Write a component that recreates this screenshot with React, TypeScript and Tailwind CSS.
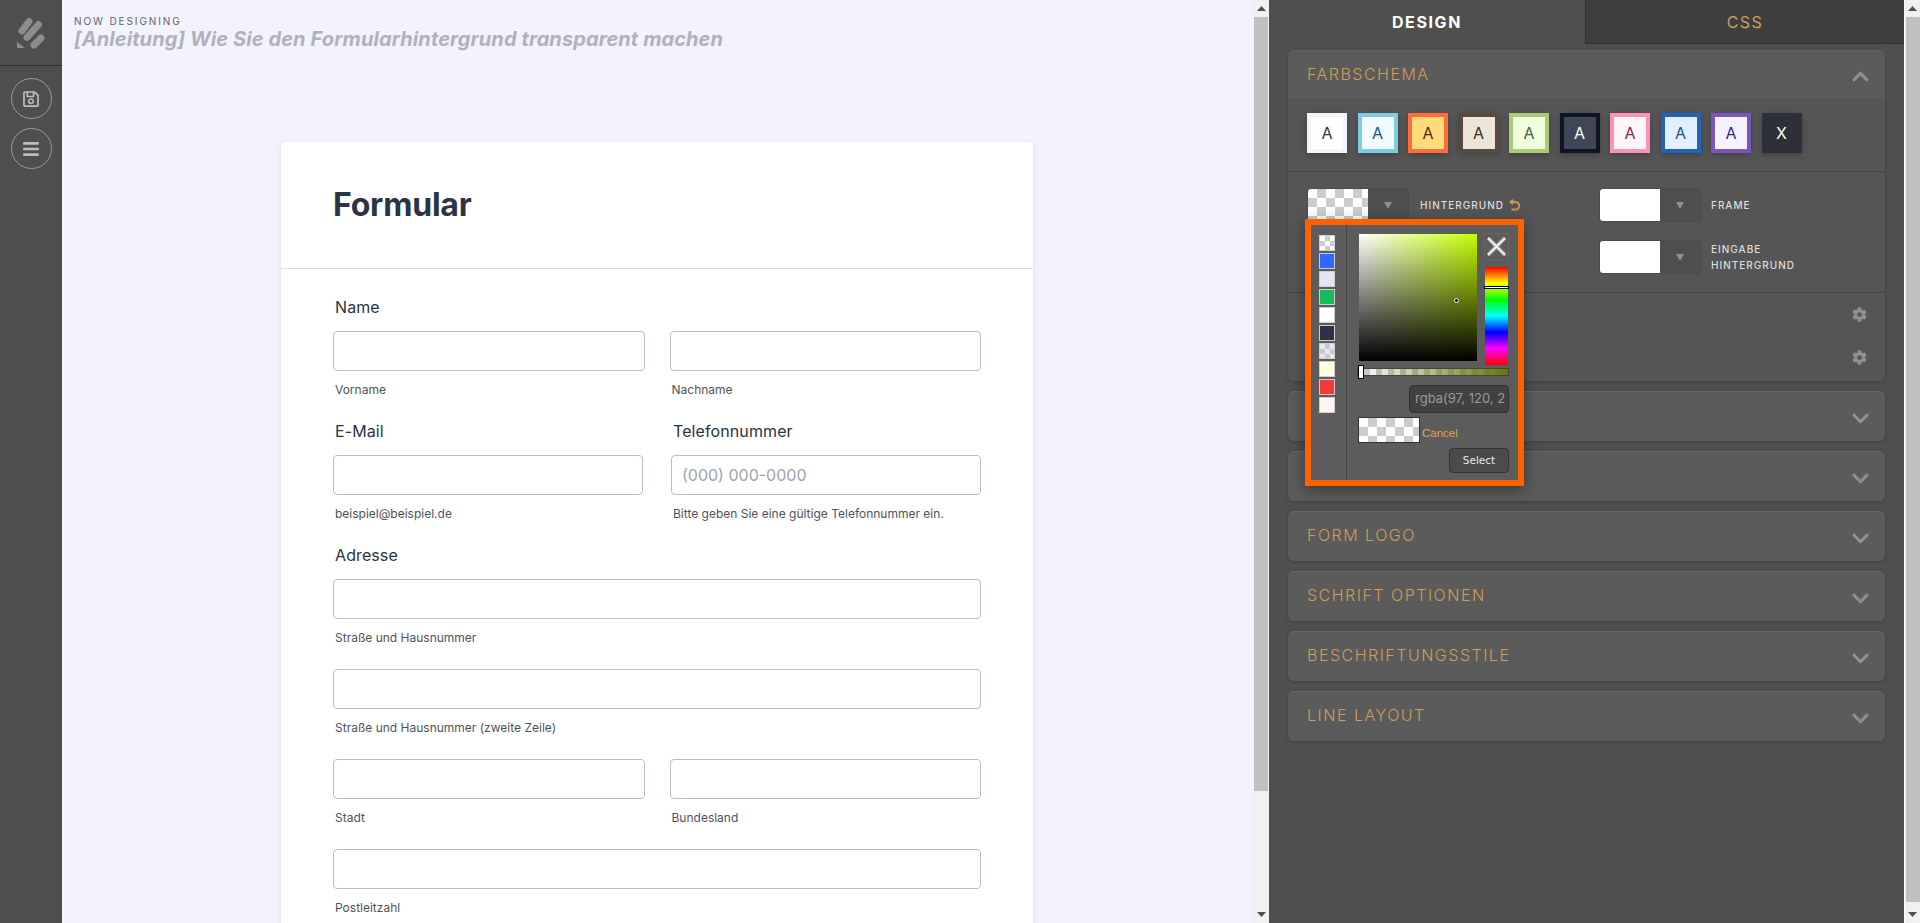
import { FaBars, FaChevronDown, FaChevronUp, FaCog, FaRegSave } from 'react-icons/fa'

const themes = [
  { border: 'border-[#f3f3fe]', bg: 'bg-[#ffffff]', text: 'text-[#2c3345]', label: 'A' },
  { border: 'border-[#7ecbe2]', bg: 'bg-[#f0fbff]', text: 'text-[#1f4f7f]', label: 'A' },
  { border: 'border-[#ff6b3d]', bg: 'bg-[#ffdc7b]', text: 'text-[#5a1c00]', label: 'A' },
  { border: 'border-[#59483f]', bg: 'bg-[#ede6d8]', text: 'text-[#3f2a1f]', label: 'A' },
  { border: 'border-[#aacc76]', bg: 'bg-[#f1ffdf]', text: 'text-[#43633a]', label: 'A' },
  { border: 'border-[#101322]', bg: 'bg-[#3f4658]', text: 'text-white', label: 'A' },
  { border: 'border-[#ff8fbb]', bg: 'bg-[#fff6fa]', text: 'text-[#8a1d4e]', label: 'A' },
  { border: 'border-[#2162bb]', bg: 'bg-[#e3efff]', text: 'text-[#1a4f9a]', label: 'A' },
  { border: 'border-[#7a55bb]', bg: 'bg-[#f6f2ff]', text: 'text-[#3a1f7a]', label: 'A' },
  { border: 'border-[#2e3039]', bg: 'bg-[#2e3039]', text: 'text-white', label: 'X' },
]

const palette = [
  'checker',
  'bg-[#2e69ff]',
  'bg-[#e3e5f5]',
  'bg-[#18bd5b]',
  'bg-white',
  'bg-[#2b3245]',
  'checkerGray',
  'bg-[#ffffdf]',
  'bg-[#f23a3c]',
  'bg-[#fff4f3]',
]

const collapsed = ['', '', 'Form Logo', 'Schrift Optionen', 'Beschriftungsstile', 'Line Layout']

const checker =
  'bg-[conic-gradient(#cccccc_25%,#ffffff_0_50%,#cccccc_0_75%,#ffffff_0)] bg-[length:18px_18px]'

function Arrow({ down = false }: { down?: boolean }) {
  return (
    <svg width="9" height="5" viewBox="0 0 9 5" className="fill-[#505050]">
      <polygon points={down ? '0,0 9,0 4.5,5' : '4.5,0 9,5 0,5'} />
    </svg>
  )
}

function Scrollbar({ thumbHeight, className }: { thumbHeight: string; className: string }) {
  return (
    <div className={`flex w-4 shrink-0 flex-col items-center bg-[#f1f1f1] ${className}`}>
      <div className="flex h-[17px] shrink-0 items-center justify-center">
        <Arrow />
      </div>
      <div className={`w-[14px] bg-[#c1c1c1] ${thumbHeight}`} />
      <div className="mt-auto flex h-[17px] shrink-0 items-center justify-center">
        <Arrow down />
      </div>
    </div>
  )
}

function Field({ sub, placeholder, className = 'flex-1' }: { sub: string; placeholder?: string; className?: string }) {
  return (
    <div className={className}>
      <div className="flex h-10 items-center rounded border border-[#b8bdc9] bg-white px-[10px] text-base text-[#a0a3ad]">
        {placeholder}
      </div>
      <div className="mt-[11px] h-4 pl-[2px] text-xs leading-4 text-[#50525c]">{sub}</div>
    </div>
  )
}

function Label({ children }: { children: string }) {
  return <div className="mb-[14px] h-5 pl-[2px] text-base leading-5 tracking-[0.1px] text-[#2c3345]">{children}</div>
}

function ColorControl({ swatch = 'bg-white' }: { swatch?: string }) {
  return (
    <div className="flex h-[34px] w-[102px] shrink-0 overflow-hidden rounded border border-[#4a4a4a] bg-[#4f4f4f]">
      <div className={`h-full w-[60px] ${swatch}`} />
      <div className="flex flex-1 items-center justify-center">
        <svg width="8" height="7" viewBox="0 0 8 7" className="fill-[#8f8f8f]">
          <polygon points="0,0 8,0 4,7" />
        </svg>
      </div>
    </div>
  )
}

function ColorPopup() {
  return (
    <div className="absolute top-[219px] left-[36px] z-10 flex h-[267px] w-[219px] border-[6px] border-[#ff6100] bg-[#5c5c5c] shadow-[0_4px_14px_rgba(0,0,0,0.4)]">
      <div className="flex w-[36px] flex-col gap-[2px] border-r border-[#444444] pt-[10px] pl-2">
        {palette.map((item, i) => (
          <div
            key={i}
            className={`h-4 w-4 border border-[#cfcfcf] ${
              item === 'checker'
                ? 'bg-[conic-gradient(#cccccc_25%,#ffffff_0_50%,#cccccc_0_75%,#ffffff_0)] bg-[length:10px_10px]'
                : item === 'checkerGray'
                  ? 'bg-[conic-gradient(#c9cbd2_25%,#e8e9ee_0_50%,#c9cbd2_0_75%,#e8e9ee_0)] bg-[length:10px_10px]'
                  : item
            }`}
          />
        ))}
      </div>
      <div className="flex flex-col pt-[8px] pl-[12px]">
        <div className="flex">
          <div className="relative mt-px h-[127px] w-[118px] bg-[linear-gradient(to_top,#000000,transparent),linear-gradient(to_right,#ffffff,#c4ff00)]">
            <div className="absolute top-[64px] left-[95px] h-[5px] w-[5px] rounded-full border border-white bg-black" />
          </div>
          <div className="ml-[7px] flex w-[25px] flex-col">
            <div className="flex h-[27px] items-center justify-center border border-[#666666]">
              <svg width="21" height="21" viewBox="0 0 21 21">
                <path d="M2 2 19 19M19 2 2 19" className="stroke-[#9a9a9a]" strokeWidth="4" />
                <path d="M2 2 19 19M19 2 2 19" className="stroke-[#f2f2f2]" strokeWidth="1.8" />
              </svg>
            </div>
            <div className="relative mx-auto mt-[7px] h-[98px] w-[23px] bg-[linear-gradient(to_bottom,#ff0000,#ffff00,#00ff00,#00ffff,#0000ff,#ff00ff,#ff0000)]">
              <div className="absolute top-[19px] -left-px h-[3px] w-[25px] border border-black bg-white" />
            </div>
          </div>
        </div>
        <div className="relative mt-[3px] h-2 w-[152px] -translate-x-[2px] border border-[#444444] bg-[linear-gradient(to_right,rgba(97,120,10,0),#61780a),conic-gradient(#cccccc_25%,#ffffff_0_50%,#cccccc_0_75%,#ffffff_0)] bg-[length:100%_100%,12px_12px]">
          <div className="absolute -top-[4px] left-0 h-[14px] w-[6px] border border-black bg-white" />
        </div>
        <div className="mt-[9px] flex h-[28px] w-[100px] -translate-x-[2px] items-center self-end rounded border border-[#333333] bg-[#414141] pl-[5px] text-[13px] whitespace-nowrap text-[#9b9b9b]">
          rgba(97, 120, 2
        </div>
        <div className="mt-1 flex h-[26px] -translate-x-px items-center">
          <div className={`h-[26px] w-[62px] border border-[#333333] ${checker}`} />
          <span className="mt-2 ml-[2px] font-['Liberation_Sans',sans-serif] text-[11.5px] text-[#dfa654]">Cancel</span>
        </div>
        <div className="mt-[5px] flex h-[25px] w-[60px] -translate-x-[2px] items-center justify-center self-end rounded border border-[#333333] bg-[#4b4b4b] font-['DejaVu_Sans',sans-serif] text-[10.5px] text-[#e8e8e8]">
          Select
        </div>
      </div>
    </div>
  )
}

export default function App() {
  return (
    <div className="flex h-[923px] w-full overflow-hidden bg-[#f3f3fe] font-['Inter',sans-serif]">
      <aside className="flex w-[62px] shrink-0 flex-col items-center bg-[#4e4e4e]">
        <div className="flex h-[66px] w-full items-center justify-center border-b border-[#2f2f2f]">
          <svg width="30" height="34" viewBox="16 16 30 34" className="fill-[#8c8c8c] stroke-[#8c8c8c]">
            <path d="M22 31 29 21.5" strokeWidth="7" strokeLinecap="round" />
            <path d="M27 37.5 38.5 24.5" strokeWidth="7" strokeLinecap="round" />
            <path d="M34 45 41 38" strokeWidth="7" strokeLinecap="round" />
            <path d="M17 42 25 48H17z" strokeWidth="0" />
          </svg>
        </div>
        <button className="mt-[12px] flex h-[41px] w-[41px] items-center justify-center rounded-full border border-[#9a9a9a]">
          <FaRegSave className="h-[18px] w-[18px] text-[#bdbdbd]" />
        </button>
        <button className="mt-[9px] flex h-[41px] w-[41px] items-center justify-center rounded-full border border-[#9a9a9a]">
          <FaBars className="h-[18px] w-[18px] text-[#bdbdbd]" />
        </button>
      </aside>

      <main className="min-w-0 flex-1 overflow-hidden">
        <div className="h-[142px] pt-[15px] pl-[12px]">
          <div className="text-[10px] leading-3 tracking-[1.9px] text-[#62626d]">NOW DESIGNING</div>
          <div className="text-[20px] leading-[25px] font-bold tracking-[0.1px] text-[#b1b1bd] italic">
            [Anleitung] Wie Sie den Formularhintergrund transparent machen
          </div>
        </div>
        <section className="ml-[219px] w-[752px] rounded-t bg-white pb-10 shadow-[0_2px_6px_rgba(87,114,147,0.15)]">
          <div className="flex h-[127px] items-center border-b border-[#d8dae9] pl-[52px]">
            <h1 className="text-[32px] font-bold tracking-[-0.2px] text-[#2c3345]">Formular</h1>
          </div>
          <div className="w-[700px] pt-[28px] pl-[52px]">
            <Label>Name</Label>
            <div className="flex gap-[25px]">
              <Field sub="Vorname" />
              <Field sub="Nachname" />
            </div>
            <div className="mt-[23px] flex gap-[28px]">
              <div className="flex-1">
                <Label>E-Mail</Label>
                <Field sub="beispiel@beispiel.de" />
              </div>
              <div className="flex-1">
                <Label>Telefonnummer</Label>
                <Field sub="Bitte geben Sie eine gültige Telefonnummer ein." placeholder="(000) 000-0000" />
              </div>
            </div>
            <div className="mt-[23px]">
              <Label>Adresse</Label>
            </div>
            <Field sub="Straße und Hausnummer" className="mb-[23px]" />
            <Field sub="Straße und Hausnummer (zweite Zeile)" className="mb-[23px]" />
            <div className="mb-[23px] flex gap-[25px]">
              <Field sub="Stadt" />
              <Field sub="Bundesland" />
            </div>
            <Field sub="Postleitzahl" />
          </div>
        </section>
      </main>

      <Scrollbar thumbHeight="h-[774px]" className="" />

      <div className="relative flex w-[635px] shrink-0 flex-col bg-[#4f4f4f]">
        <div className="flex h-11 shrink-0">
          <div className="flex w-[316px] items-center justify-center text-base font-bold tracking-[1.6px] text-white">DESIGN</div>
          <div className="flex flex-1 items-center justify-center border-b border-l border-[#333333] bg-[#3e3e3e] text-base tracking-[1.4px] text-[#c9a063]">
            CSS
          </div>
        </div>
        <div className="flex flex-col gap-[10px] px-[19px] pt-[6px]">
          <div className="h-[331px] overflow-hidden rounded-md border-t border-[#666666] bg-[#555555] shadow-[0_1px_4px_rgba(0,0,0,0.2)]">
            <div className="flex h-[47px] items-center justify-between bg-[#5b5b5b] pr-[15px] pl-[19px]">
              <span className="-mt-[2px] text-base font-light tracking-[1.5px] text-[#d39c57]">FARBSCHEMA</span>
              <FaChevronUp className="mt-1 h-[19px] w-[19px] text-[#8f8f8f]" />
            </div>
            <div className="flex h-[74px] gap-[10.5px] border-b border-[#444444] pt-[15px] pl-[19px]">
              {themes.map((theme, i) => (
                <div
                  key={i}
                  className={`flex h-10 w-10 items-center justify-center border-4 text-base shadow-[0_2px_6px_rgba(0,0,0,0.25)] ${theme.border} ${theme.bg} ${theme.text}`}
                >
                  {theme.label}
                </div>
              ))}
            </div>
            <div className="flex h-[121px] border-b border-[#444444] pt-[16px] pl-[19px]">
              <div className="w-[292px]">
                <div className="flex items-center gap-[11px]">
                  <ColorControl swatch={checker} />
                  <span className="flex items-center gap-1 text-[10px] font-medium tracking-[1px] text-[#dddddd]">
                    HINTERGRUND
                    <svg width="13" height="13" viewBox="0 0 13 13" fill="none" className="stroke-[#c6975a]" strokeWidth="2">
                      <path d="M3 3H7.5a3.8 3.8 0 0 1 0 7.6H3.5" />
                      <path d="M5 .8 2.6 3 5 5.2" />
                    </svg>
                  </span>
                </div>
              </div>
              <div className="flex flex-col gap-[18px]">
                <div className="flex items-center gap-[10px]">
                  <ColorControl />
                  <span className="text-[10px] font-medium tracking-[1px] text-[#dddddd]">FRAME</span>
                </div>
                <div className="flex items-center gap-[10px]">
                  <ColorControl />
                  <span className="text-[10px] leading-4 font-medium tracking-[1px] text-[#dddddd]">
                    EINGABE
                    <br />
                    HINTERGRUND
                  </span>
                </div>
              </div>
            </div>
            <div className="flex flex-col items-end gap-[28px] pt-[14px] pr-[18px]">
              <FaCog className="h-[15px] w-[15px] text-[#8f8f8f]" />
              <FaCog className="h-[15px] w-[15px] text-[#8f8f8f]" />
            </div>
          </div>
          {collapsed.map((title, i) => (
            <div
              key={i}
              className="flex h-[50px] items-center justify-between rounded-md border-t border-[#666666] bg-[#5b5b5b] pr-[15px] pl-[19px] shadow-[0_1px_4px_rgba(0,0,0,0.2)]"
            >
              <span className="-mt-[4px] text-base font-light tracking-[1.5px] text-[#d39c57] uppercase">{title}</span>
              <FaChevronDown className="mt-1 h-[19px] w-[19px] text-[#8f8f8f]" />
            </div>
          ))}
        </div>
        <ColorPopup />
      </div>

      <Scrollbar thumbHeight="h-[885px]" className="border-l border-white" />
    </div>
  )
}
